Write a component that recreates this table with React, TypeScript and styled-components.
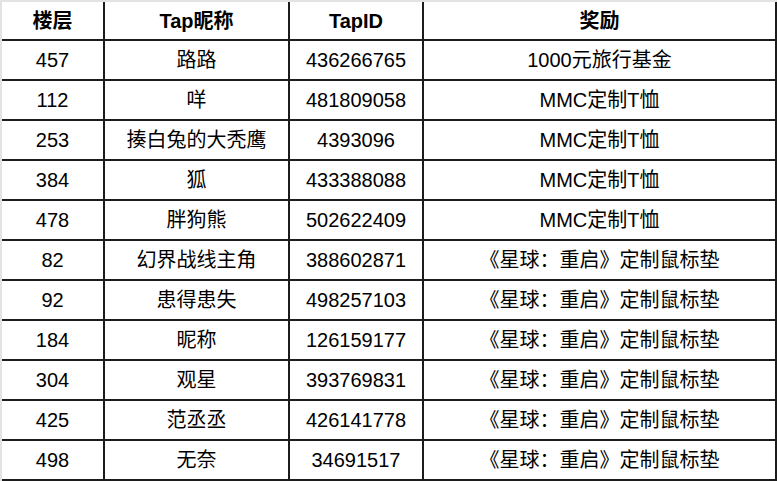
import styled, { createGlobalStyle } from 'styled-components';

const GlobalStyle = createGlobalStyle`
  html, body {
    margin: 0;
    padding: 0;
    background: #ffffff;
  }
  * {
    box-sizing: border-box;
  }
`;

interface Winner {
  floor: string;
  name: string;
  tapId: string;
  prize: string;
}

const winners: Winner[] = [
  { floor: '457', name: '路路', tapId: '436266765', prize: '1000元旅行基金' },
  { floor: '112', name: '咩', tapId: '481809058', prize: 'MMC定制T恤' },
  { floor: '253', name: '揍白兔的大秃鹰', tapId: '4393096', prize: 'MMC定制T恤' },
  { floor: '384', name: '狐', tapId: '433388088', prize: 'MMC定制T恤' },
  { floor: '478', name: '胖狗熊', tapId: '502622409', prize: 'MMC定制T恤' },
  { floor: '82', name: '幻界战线主角', tapId: '388602871', prize: '《星球：重启》定制鼠标垫' },
  { floor: '92', name: '患得患失', tapId: '498257103', prize: '《星球：重启》定制鼠标垫' },
  { floor: '184', name: '昵称', tapId: '126159177', prize: '《星球：重启》定制鼠标垫' },
  { floor: '304', name: '观星', tapId: '393769831', prize: '《星球：重启》定制鼠标垫' },
  { floor: '425', name: '范丞丞', tapId: '426141778', prize: '《星球：重启》定制鼠标垫' },
  { floor: '498', name: '无奈', tapId: '34691517', prize: '《星球：重启》定制鼠标垫' },
];

const Sheet = styled.div`
  width: 777px;
  height: 481px;
  border-top: 2px solid #e3e3e3;
  border-left: 2px solid #e3e3e3;
  font-family: 'Liberation Sans', 'Noto Sans CJK SC', sans-serif;
  color: #000000;
  overflow: hidden;
`;

const Row = styled.div<{ $head?: boolean }>`
  display: grid;
  grid-template-columns: 103px 185px 134px 353px;
  height: ${({ $head }) => ($head ? '39px' : '40px')};
  font-size: 20px;
  font-weight: ${({ $head }) => ($head ? 700 : 400)};
`;

const Cell = styled.div`
  display: flex;
  align-items: center;
  justify-content: center;
  border-right: 2px solid #1c1c1c;
  border-bottom: 2px solid #1c1c1c;
  white-space: nowrap;
  line-height: 1;
`;

export default function App() {
  return (
    <>
      <GlobalStyle />
      <Sheet>
        <Row $head>
          <Cell>楼层</Cell>
          <Cell>Tap昵称</Cell>
          <Cell>TapID</Cell>
          <Cell>奖励</Cell>
        </Row>
        {winners.map((w) => (
          <Row key={w.tapId}>
            <Cell>{w.floor}</Cell>
            <Cell>{w.name}</Cell>
            <Cell>{w.tapId}</Cell>
            <Cell>{w.prize}</Cell>
          </Row>
        ))}
      </Sheet>
    </>
  );
}
